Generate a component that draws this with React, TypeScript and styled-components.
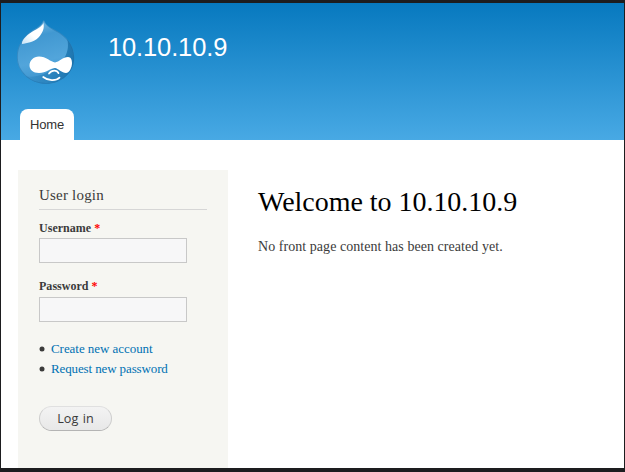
import React from "react";
import styled, { createGlobalStyle } from "styled-components";

const GlobalStyle = createGlobalStyle`
  *, *::before, *::after { box-sizing: border-box; }
  body { margin: 0; background: #1d1d1f; }
`;

const serif = `"Liberation Serif", "Times New Roman", serif`;
const sans = `"Liberation Sans", Arial, sans-serif`;

const Frame = styled.div`
  height: 472px;
  padding: 3px 1px 4px;
  background: #1d1d1f;
  overflow: hidden;
`;

const Page = styled.div`
  height: 465px;
  display: flex;
  flex-direction: column;
  background: #fff;
  color: #3b3b3b;
  font: 14px/21px ${serif};
  overflow: hidden;
`;

const Header = styled.header`
  flex: none;
  height: 137px;
  display: flex;
  flex-direction: column;
  justify-content: space-between;
  background: linear-gradient(#0779bf, #48a9e4);
`;

const Branding = styled.div`
  display: flex;
  align-items: flex-start;
  padding: 16px 0 0 15px;
`;

const Logo = styled.svg`
  display: block;
  width: 60px;
  height: 66px;
`;

const SiteName = styled.a`
  margin: 13px 0 0 32px;
  color: #fffeff;
  font: 25.5px/30px ${sans};
  letter-spacing: -0.13px;
`;

const Tabs = styled.nav`
  display: flex;
  padding-left: 19px;
`;

const Tab = styled.a`
  width: 54px;
  height: 31px;
  padding: 0 10px;
  border-radius: 8px 8px 0 0;
  background: #fff;
  color: #333;
  font: 13px/32px ${sans};
  letter-spacing: -0.15px;
`;

const Main = styled.main`
  flex: 1;
  display: flex;
  align-items: stretch;
  gap: 30px;
  padding: 30px 17px 0;
`;

const Sidebar = styled.aside`
  flex: none;
  width: 210px;
  padding: 15px 21px 0;
  background: #f6f6f2;
`;

const BlockTitle = styled.h2`
  margin: 0;
  height: 25px;
  border-bottom: 1px solid #d6d6d6;
  font-size: 15px;
  font-weight: 400;
  line-height: 21px;
  letter-spacing: 0.2px;
`;

const Field = styled.label<{ $gap: number }>`
  display: block;
  margin-top: ${(p) => p.$gap}px;
  font-size: 12px;
  font-weight: 700;
  line-height: 18px;
  letter-spacing: 0.03px;
`;

const Required = styled.span`
  color: #f00;
`;

const Input = styled.input<{ $gap: number }>`
  display: block;
  width: 148px;
  height: 25px;
  margin-top: ${(p) => p.$gap}px;
  padding: 4px;
  border: 1px solid #c8c8c8;
  border-radius: 0;
  background: #f7f7f8;
  outline: none;
`;

const Links = styled.ul`
  margin: 17px 0 0;
  padding: 0;
  list-style: none;
`;

const LinkItem = styled.li`
  display: flex;
  align-items: center;
  height: 20px;
  gap: 7px;
  font-size: 13px;
  line-height: 20px;

  &::before {
    content: "";
    width: 5px;
    height: 5px;
    border-radius: 50%;
    background: #3b3b3b;
    transform: translate(0.5px, -0.5px);
  }
`;

const Link = styled.a<{ $tracking: number }>`
  color: #0071b3;
  letter-spacing: ${(p) => p.$tracking}px;
`;

const Submit = styled.button`
  display: block;
  width: 73px;
  height: 25px;
  margin-top: 27px;
  padding: 0;
  border: 1px solid #cdcdcd;
  border-top-color: #e0e0e0;
  border-bottom-color: #b4b4b4;
  border-radius: 13px;
  background: linear-gradient(#f3f3f3, #e8e8e8);
  color: #3a3a3a;
  font: 12.6px/23px "Open Sans", Verdana, sans-serif;
  word-spacing: 1.3px;
`;

const Content = styled.section`
  flex: 1;
`;

const PageTitle = styled.h1`
  margin: 14px 0 0;
  color: #000;
  font-size: 28px;
  font-weight: 400;
  line-height: 36px;
  letter-spacing: -0.03px;
`;

const Notice = styled.p`
  margin: 16px 0 0;
  letter-spacing: 0.05px;
`;

const drop =
  "M33.2 6.8L34.2 6.8C36 11 39 13 44 15.5C56 21 64.2 31 64.2 44C64.2 59 51 69.8 36 69.8C20 69.8 7 58 7 43C7 31 13 23.5 21 17.5C27 13.5 31.5 12 33.2 6.8Z";

const DrupalMark = () => (
  <Logo viewBox="6 5 60 66" role="img" aria-label="Home">
    <defs>
      <linearGradient id="body" x1="0" y1="0" x2="0.2" y2="1">
        <stop offset="0" stopColor="#80c0e8" />
        <stop offset="0.3" stopColor="#4198d1" />
        <stop offset="0.7" stopColor="#52a5db" />
        <stop offset="1" stopColor="#3c94ce" />
      </linearGradient>
      <linearGradient id="shade" x1="0" y1="0" x2="1" y2="0">
        <stop offset="0" stopColor="#2580bb" stopOpacity="0.3" />
        <stop offset="1" stopColor="#1069a4" />
      </linearGradient>
      <linearGradient id="shine" x1="1" y1="0" x2="0" y2="1">
        <stop offset="0.55" stopColor="#fff" />
        <stop offset="1" stopColor="#c8e4f6" />
      </linearGradient>
      <clipPath id="dropClip">
        <path d={drop} />
      </clipPath>
    </defs>
    <path d={drop} fill="url(#body)" />
    <g clipPath="url(#dropClip)">
      <path
        d="M56 21C60 32 58 42 49 50C40 59 25 65 14 62C22 69 30 72 40 71C56 69 66 57 65 42C64 34 62 26 56 21Z"
        fill="url(#shade)"
        opacity="0.8"
      />
      <path d={drop} fill="none" stroke="#1c70aa" strokeWidth="1.4" opacity="0.5" />
    </g>
    <path
      d="M33.4 9C34.6 14 33 18.5 28.5 23.5C23.5 28.5 17 29 12 30C11.5 26.5 15.5 22 21.8 18C27.5 14.5 31.5 13 33.4 9Z"
      fill="url(#shine)"
    />
    <path
      d="M29 42.5C36 42.5 41 48 45 48.5C49 48 53 43 58 43C61 43 62 46 62 49C62 54 59 59 56 59C52 59 48 54.5 45 54C41 54 36 59 29 59C23 59 19.5 55.5 19.5 51.5C19.5 46.5 23.5 42.5 29 42.5Z"
      fill="#fff"
    />
    <path
      d="M39 59.5C42 55.5 47 56 48.5 59.2M33.2 63C38 67 46 67.2 49.5 63.7"
      fill="none"
      stroke="#fff"
      strokeWidth="1.7"
      strokeLinecap="round"
    />
  </Logo>
);

export default function App() {
  return (
    <>
      <GlobalStyle />
      <Frame>
        <Page>
          <Header>
            <Branding>
              <DrupalMark />
              <SiteName>10.10.10.9</SiteName>
            </Branding>
            <Tabs>
              <Tab>Home</Tab>
            </Tabs>
          </Header>
          <Main>
            <Sidebar>
              <BlockTitle>User login</BlockTitle>
              <Field $gap={9}>
                Username <Required>*</Required>
                <Input $gap={1} type="text" />
              </Field>
              <Field $gap={14}>
                Password <Required>*</Required>
                <Input $gap={2} type="password" />
              </Field>
              <Links>
                <LinkItem>
                  <Link $tracking={-0.05}>Create new account</Link>
                </LinkItem>
                <LinkItem>
                  <Link $tracking={-0.12}>Request new password</Link>
                </LinkItem>
              </Links>
              <Submit type="button">Log in</Submit>
            </Sidebar>
            <Content>
              <PageTitle>Welcome to 10.10.10.9</PageTitle>
              <Notice>No front page content has been created yet.</Notice>
            </Content>
          </Main>
        </Page>
      </Frame>
    </>
  );
}
